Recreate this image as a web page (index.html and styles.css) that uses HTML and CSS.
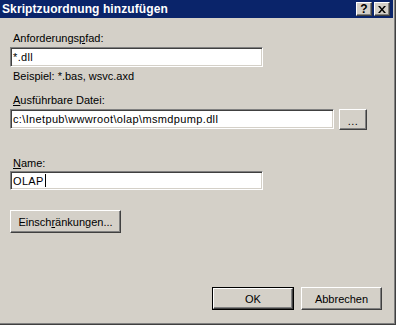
FILE: index.html
```html
<!DOCTYPE html>
<html>
<head>
<meta charset="utf-8">
<link rel="stylesheet" href="styles.css">
</head>
<body>
<div class="window">
  <div class="titlebar">
    <span class="title">Skriptzuordnung hinzufügen</span>
    <div class="caption-buttons">
      <span class="cap-btn help">?</span>
      <span class="cap-btn close">
        <svg width="8" height="7" viewBox="0 0 8 7"><path d="M0 0h2l2 2.5L6 0h2L5 3.5 8 7H6L4 4.5 2 7H0l3-3.5z" fill="#000"/></svg>
      </span>
    </div>
  </div>
  <div class="content">
    <div class="label first">Anforderungs<u>p</u>fad:</div>
    <div class="field short">*.dll</div>
    <div class="hint">Beispiel: *.bas, wsvc.axd</div>
    <div class="label second"><u>A</u>usführbare Datei:</div>
    <div class="row">
      <div class="field long">c:\Inetpub\wwwroot\olap\msmdpump.dll</div>
      <div class="btn browse">...</div>
    </div>
    <div class="label third"><u>N</u>ame:</div>
    <div class="field short name">OLAP<span class="caret"></span></div>
    <div class="btn limits">Einsch<u>r</u>änkungen...</div>
  </div>
  <div class="footer">
    <div class="default-wrap"><div class="btn ok">OK</div></div>
    <div class="btn cancel">Abbrechen</div>
  </div>
</div>
</body>
</html>
```
FILE: styles.css
```css
html, body {
  margin: 0;
  padding: 0;
  width: 396px;
  height: 325px;
  overflow: hidden;
  background: #d4d0c8;
}
.window {
  width: 396px;
  height: 325px;
  box-sizing: border-box;
  background: #d4d0c8;
  border-right: 1px solid #404040;
  border-bottom: 1px solid #404040;
  box-shadow: inset -1px -1px 0 #808080;
  font-family: "Liberation Sans", Arial, sans-serif;
  font-size: 11px;
  color: #000;
  display: flex;
  flex-direction: column;
}
.titlebar {
  height: 18px;
  background: #0a246a;
  display: flex;
  align-items: center;
  justify-content: space-between;
  padding: 0 2px 0 2px;
  margin-right: 2px;
}
.title {
  color: #fff;
  font-weight: bold;
  font-size: 12px;
  letter-spacing: 0.1px;
}
.caption-buttons {
  display: flex;
  gap: 2px;
  padding-right: 1px;
}
.cap-btn {
  width: 16px;
  height: 14px;
  box-sizing: border-box;
  background: #d4d0c8;
  border-top: 1px solid #fff;
  border-left: 1px solid #fff;
  border-right: 1px solid #404040;
  border-bottom: 1px solid #404040;
  box-shadow: inset -1px -1px 0 #808080;
  display: flex;
  align-items: center;
  justify-content: center;
  font-weight: bold;
  font-size: 12px;
  line-height: 12px;
}
.content {
  padding: 0 10px;
  display: flex;
  flex-direction: column;
  align-items: flex-start;
  flex: 1;
}
.label {
  padding-left: 3px;
  line-height: 13px;
  height: 13px;
}
.label.first { margin-top: 14px; margin-bottom: 2px; }
.label.second { margin-top: 11px; margin-bottom: 2px; }
.label.third { margin-top: 27px; margin-bottom: 1px; }
.hint {
  padding-left: 3px;
  margin-top: 3px;
  line-height: 13px;
}
.field {
  box-sizing: border-box;
  height: 20px;
  background: #fff;
  border-top: 1px solid #808080;
  border-left: 1px solid #808080;
  border-right: 1px solid #fff;
  border-bottom: 1px solid #fff;
  box-shadow: inset 1px 1px 0 #404040, inset -1px -1px 0 #d4d0c8;
  padding: 0 2px;
  line-height: 18px;
  letter-spacing: 0.35px;
  white-space: nowrap;
  overflow: hidden;
  display: flex;
  align-items: center;
}
.field.short { width: 253px; }
.field.long { width: 324px; }
.field.name { height: 19px; }
.caret {
  display: inline-block;
  width: 1px;
  height: 13px;
  background: #000;
  margin-left: 1px;
}
.row {
  display: flex;
  gap: 5px;
  align-items: flex-start;
}
.btn {
  box-sizing: border-box;
  background: #d4d0c8;
  border-top: 1px solid #fff;
  border-left: 1px solid #fff;
  border-right: 1px solid #404040;
  border-bottom: 1px solid #404040;
  box-shadow: inset -1px -1px 0 #808080;
  display: flex;
  align-items: center;
  justify-content: center;
}
.browse {
  width: 28px;
  height: 21px;
  padding-top: 2px;
  letter-spacing: 0.5px;
}
.limits {
  margin-top: 20px;
  width: 111px;
  height: 23px;
}
.footer {
  display: flex;
  justify-content: flex-end;
  gap: 7px;
  padding: 0 13px 14px 0;
}
.default-wrap {
  border: 1px solid #000;
}
.ok {
  width: 80px;
  height: 21px;
}
.cancel {
  width: 81px;
  height: 23px;
}
u { text-decoration: underline; }
```
